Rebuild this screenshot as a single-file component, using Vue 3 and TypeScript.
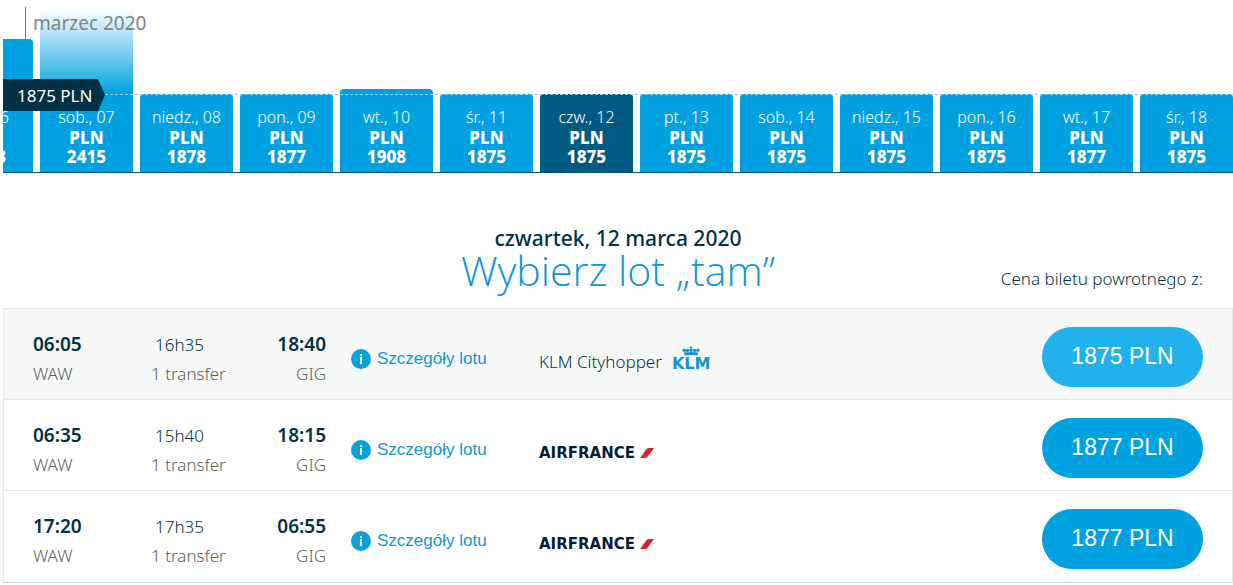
<script setup lang="ts">
interface Day {
  label: string
  price: string
  height: number
  selected?: boolean
  fading?: boolean
}

interface Flight {
  departure: string
  duration: string
  arrival: string
  carrier: 'klm' | 'airfrance'
  price: string
  hovered?: boolean
}

const days: Day[] = [
  { label: 'pt., 06', price: '2103', height: 133 },
  { label: 'sob., 07', price: '2415', height: 164, fading: true },
  { label: 'niedz., 08', price: '1878', height: 78 },
  { label: 'pon., 09', price: '1877', height: 78 },
  { label: 'wt., 10', price: '1908', height: 83 },
  { label: 'śr., 11', price: '1875', height: 78 },
  { label: 'czw., 12', price: '1875', height: 78, selected: true },
  { label: 'pt., 13', price: '1875', height: 78 },
  { label: 'sob., 14', price: '1875', height: 78 },
  { label: 'niedz., 15', price: '1875', height: 78 },
  { label: 'pon., 16', price: '1875', height: 78 },
  { label: 'wt., 17', price: '1877', height: 78 },
  { label: 'śr., 18', price: '1875', height: 78 },
]

const flights: Flight[] = [
  { departure: '06:05', duration: '16h35', arrival: '18:40', carrier: 'klm', price: '1875 PLN', hovered: true },
  { departure: '06:35', duration: '15h40', arrival: '18:15', carrier: 'airfrance', price: '1877 PLN' },
  { departure: '17:20', duration: '17h35', arrival: '06:55', carrier: 'airfrance', price: '1877 PLN' },
]
</script>

<template>
  <main class="page">
    <section class="calendar">
      <div class="days">
        <button
          v-for="day in days"
          :key="day.label"
          type="button"
          class="day"
          :class="{ selected: day.selected, fading: day.fading }"
          :style="{ height: day.height + 'px' }"
        >
          <span class="day-label">{{ day.label }}</span>
          <strong class="day-price">PLN<br />{{ day.price }}</strong>
        </button>
      </div>
      <div class="month">marzec 2020</div>
      <div class="lowest-line"></div>
      <div class="lowest-tag">1875 PLN</div>
    </section>

    <header class="heading">
      <div class="titles">
        <h2 class="date">czwartek, 12 marca 2020</h2>
        <h1 class="title">Wybierz lot „tam”</h1>
      </div>
      <p class="note">Cena biletu powrotnego z:</p>
    </header>

    <ul class="flights">
      <li v-for="flight in flights" :key="flight.departure" class="flight" :class="{ hovered: flight.hovered }">
        <div class="stop">
          <strong>{{ flight.departure }}</strong>
          <span class="muted">WAW</span>
        </div>
        <div class="stop">
          <span class="duration">{{ flight.duration }}</span>
          <span class="muted">1 transfer</span>
        </div>
        <div class="stop arrival">
          <strong>{{ flight.arrival }}</strong>
          <span class="muted">GIG</span>
        </div>
        <a href="#" class="details">
          <svg width="20" height="20" viewBox="0 0 20 20" aria-hidden="true">
            <circle cx="10" cy="10" r="10" fill="#0aa0dd" />
            <path d="M9 5h2v2H9zM9 8h2v7H9z" fill="#fff" />
          </svg>
          <span>Szczegóły lotu</span>
        </a>
        <div class="carrier">
          <template v-if="flight.carrier === 'klm'">
            <span class="carrier-name">KLM Cityhopper</span>
            <span class="klm">
              <svg width="18" height="10" viewBox="0 0 20 11" aria-hidden="true">
                <g fill="#1296d2">
                  <path d="M9.4 0h1.2v1h1v1h-1v1H9.4V2h-1V1h1z" />
                  <circle cx="10" cy="4.6" r="1.9" />
                  <circle cx="6" cy="5" r="1.9" />
                  <circle cx="14" cy="5" r="1.9" />
                  <circle cx="2.4" cy="4.6" r="1.9" />
                  <circle cx="17.6" cy="4.6" r="1.9" />
                  <path d="M2 7.2Q10 6.2 18 7.2L17 10.4Q10 9.4 3 10.4z" />
                </g>
              </svg>
              <b>KLM</b>
            </span>
          </template>
          <span v-else class="airfrance">
            <b>AIRFRANCE</b>
            <svg width="14" height="10" viewBox="0 0 14 10" aria-hidden="true">
              <path d="M0 10L6.4 1.2Q7.3 0 9 0H14L7.6 8.8Q6.7 10 5 10z" fill="#d8232f" />
            </svg>
          </span>
        </div>
        <button type="button" class="price">{{ flight.price }}</button>
      </li>
    </ul>
  </main>
</template>

<style>
body {
  background: #fff;
}
</style>

<style scoped>
.page {
  padding-left: 3px;
  font-family: "Noto Sans", "Open Sans", sans-serif;
  font-size: 17px;
  color: #003145;
}

.calendar {
  position: relative;
  height: 172px;
  overflow: hidden;
  border-bottom: 1px solid #00567d;
}

.days {
  display: flex;
  align-items: flex-end;
  gap: 7px;
  height: 172px;
  margin-left: -63px;
}

.day {
  flex: 1 1 0;
  min-width: 0;
  display: flex;
  flex-direction: column;
  justify-content: flex-end;
  align-items: center;
  padding: 0 0 6px;
  border: 0;
  border-radius: 4px 4px 0 0;
  background: #00a1e0;
  color: #fff;
  font-family: inherit;
  font-size: 16px;
  white-space: nowrap;
}

.day.selected {
  background: #005b82;
}

.day.fading {
  background: linear-gradient(to bottom, #fff 0, #00a1e0 86px);
}

.day-label {
  font-weight: 300;
  line-height: 22px;
}

.day-price {
  font-size: 17px;
  font-weight: 800;
  line-height: 19px;
}

.month {
  position: absolute;
  top: 7px;
  left: 22px;
  height: 32px;
  padding-left: 7px;
  border-left: 1px solid #777;
  font-size: 19px;
  line-height: 32px;
  color: #7f8486;
}

.lowest-line {
  position: absolute;
  top: 94px;
  left: 102px;
  right: 0;
  border-top: 1px dashed #b4c4cc;
}

.lowest-tag {
  position: absolute;
  top: 79px;
  left: 0;
  width: 102px;
  box-sizing: border-box;
  padding: 2px 0 0 14px;
  background: #003145;
  clip-path: polygon(0 0, 95px 0, 100% 50%, 95px 100%, 0 100%);
  font-size: 17px;
  line-height: 30px;
  color: #fff;
}

.heading {
  display: grid;
  grid-template-columns: 1fr auto 1fr;
  align-items: end;
  padding-top: 52px;
}

.titles {
  grid-column: 2;
  text-align: center;
}

.date {
  margin: 0;
  font-size: 21px;
  font-weight: 500;
  line-height: 26px;
}

.title {
  margin: 0;
  font-family: "Open Sans", "Noto Sans", sans-serif;
  font-size: 41px;
  font-weight: 300;
  line-height: 38px;
  color: #1296d2;
  padding-bottom: 19px;
}

.note {
  margin: 0;
  padding: 0 30px 17px 0;
  text-align: right;
  font-weight: 300;
  line-height: 24px;
}

.flights {
  list-style: none;
  margin: 0;
  padding: 0;
  border: 1px solid #e3e8e8;
  border-bottom-color: #c5dce2;
}

.flight {
  display: grid;
  grid-template-columns: 118px 78px 97px 213px 1fr auto;
  align-items: center;
  height: 90px;
  padding: 0 29px;
  border-bottom: 1px solid #e3e8e8;
}

.flight:last-child {
  border-bottom-color: transparent;
}

.flight.hovered {
  background: #f6f8f8;
}

.stop {
  display: flex;
  flex-direction: column;
  padding-top: 10px;
  line-height: 29px;
  white-space: nowrap;
}

.stop strong {
  font-size: 19px;
  font-weight: 600;
}

.duration {
  padding-left: 4px;
  font-weight: 300;
}

.muted {
  font-weight: 300;
  color: #606060;
}

.arrival {
  text-align: right;
}

.details {
  display: flex;
  align-items: center;
  gap: 6px;
  padding: 10px 0 0 25px;
  font-family: "Liberation Sans", Arial, sans-serif;
  font-size: 17px;
  line-height: 22px;
  color: #1296d2;
  text-decoration: none;
}

.carrier {
  display: flex;
  align-items: center;
  gap: 10px;
  padding-top: 14px;
}

.carrier-name {
  font-weight: 300;
}

.klm {
  display: flex;
  flex-direction: column;
  align-items: center;
  padding-bottom: 5px;
  font: 16px/15px "DejaVu Sans", sans-serif;
  color: #1296d2;
}

.klm b,
.airfrance b {
  font-weight: 700;
}

.airfrance {
  display: flex;
  align-items: center;
  gap: 5px;
  padding-top: 2px;
  font: 15px/16px "DejaVu Sans", sans-serif;
  color: #051c3b;
}

.price {
  width: 161px;
  height: 60px;
  margin-top: 5px;
  padding: 0;
  border: 0;
  border-radius: 30px;
  background: #00a1e0;
  font-family: "Liberation Sans", Arial, sans-serif;
  font-size: 23px;
  color: #fff;
}

.hovered .price {
  background: #21b1ed;
}
</style>
